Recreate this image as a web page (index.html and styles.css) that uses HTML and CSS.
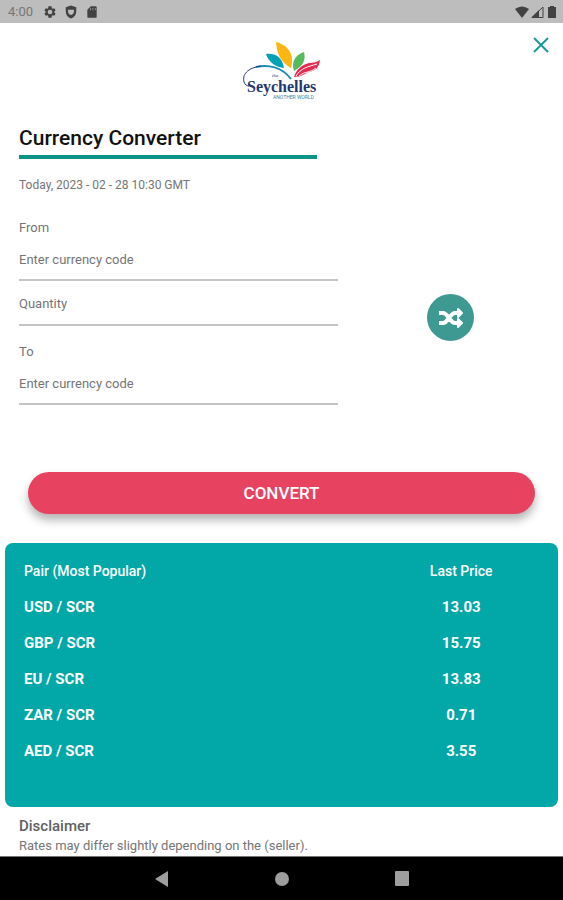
FILE: index.html
```html
<!DOCTYPE html>
<html lang="en">
<head>
<meta charset="utf-8">
<meta name="viewport" content="width=device-width, initial-scale=1">
<title>Currency Converter</title>
<link rel="stylesheet" href="styles.css">
</head>
<body>
<div class="app">
  <div class="status">
    <span class="status-time">4:00</span>
    <svg width="14" height="14" viewBox="0 0 24 24"><path fill="currentColor" fill-rule="evenodd" d="M19.4 13a7.500 7.500 0 0 0 0-2l2.200-1.700-2.200-3.800-2.600 1a7.500 7.500 0 0 0-1.700-1L14.700 2h-5.400l-.4 3.500a7.500 7.500 0 0 0-1.700 1l-2.600-1-2.200 3.800L4.600 11a7.500 7.500 0 0 0 0 2l-2.200 1.700 2.200 3.800 2.600-1a7.500 7.500 0 0 0 1.700 1l.4 3.500h5.400l.4-3.500a7.500 7.500 0 0 0 1.700-1l2.600 1 2.200-3.800zM12 16a4 4 0 1 1 0-8 4 4 0 0 1 0 8z"/></svg>
    <svg width="14" height="14" viewBox="0 0 24 24"><path fill="currentColor" fill-rule="evenodd" d="M12 1 3 4v7c0 6 4 10 9 12 5-2 9-6 9-12V4zM7 8h10v3c0 3-2 5-5 6-3-1-5-3-5-6z"/></svg>
    <svg width="14" height="14" viewBox="0 0 24 24"><path fill="currentColor" fill-rule="evenodd" d="M10 2 4 8v12a2 2 0 0 0 2 2h12a2 2 0 0 0 2-2V4a2 2 0 0 0-2-2zM9 5h1v4H9zm4 0h1v4h-1zm4 0h1v4h-1z"/></svg>
    <span class="status-end">
      <svg width="14" height="12" viewBox="0 0 14 12"><path fill="currentColor" d="M0 3Q7-2 14 3L7 12z"/></svg>
      <svg width="14" height="12" viewBox="0 0 14 12"><path fill="none" stroke="currentColor" d="M1 11.500h11V1z"/><path fill="currentColor" d="M0 12h8V4z"/></svg>
      <svg width="10" height="12" viewBox="0 0 10 12"><path fill="currentColor" d="M3 0h4v1h2v11H1V1h2z"/></svg>
    </span>
  </div>

  <header class="header">
    <svg class="logo" width="78" height="60" viewBox="0 0 78 60" role="img" aria-label="The Seychelles">
      <path fill="#00a2b8" d="M23 12c9-1 16 3 18 14-8-1-15-5-18-14z"/>
      <path fill="#fbb614" d="M33 0C44 3 52 11 48 26 38 20 34 13 33 0z"/>
      <path fill="#55bb5b" d="M61 10c2 8-1 14-10 19-3-9 1-16 10-19z"/>
      <path fill="#e52b50" d="M77 18c-1 8-5 11-11 12-5 2-8 5-15 5 2-7 7-12 15-14 5 0 8-1 11-3z"/>
      <path fill="none" stroke="#fff" d="M53 34c5-8 11-9 21-12M56 34c6-5 11-3 17-8"/>
      <path fill="none" stroke="#1b8cb5" stroke-width="2" d="M13 25c12-3 26 0 35 12"/>
      <path fill="none" stroke="#24386f" d="M18 24C4 26-1 33 1 40c1 3 3 4 5 4"/>
      <text class="logo-small" x="29" y="35">the</text>
      <text class="logo-name" x="4" y="50">Seychelles</text>
      <text class="logo-tag" x="30" y="57">ANOTHER WORLD</text>
    </svg>
    <button class="close" type="button" aria-label="Close">
      <svg width="16" height="16" viewBox="0 0 16 16"><path fill="none" stroke="currentColor" stroke-width="2" d="M1 1l14 14M15 1 1 15"/></svg>
    </button>
  </header>

  <main class="main">
    <h1 class="title">Currency Converter</h1>
    <p class="date">Today, 2023 - 02 - 28 10:30 GMT</p>

    <form class="form">
      <div class="entry">
        <div class="fields">
          <label class="label" for="from">From</label>
          <input class="field" id="from" type="text" placeholder="Enter currency code">
          <input class="field field-amount" type="text" placeholder="Quantity" aria-label="Quantity">
          <label class="label" for="to">To</label>
          <input class="field" id="to" type="text" placeholder="Enter currency code">
        </div>
        <div class="swap-area">
          <button class="swap" type="button" aria-label="Swap currencies">
            <svg width="26" height="22" viewBox="0 0 26 22"><g fill="none" stroke="currentColor" stroke-width="4"><path d="M1 6h4c5 0 7 10 12 10h3M1 16h4c5 0 7-10 12-10h3"/></g><path fill="currentColor" stroke="currentColor" stroke-width="2" stroke-linejoin="round" d="M20 2v8l4-4zM20 12v8l4-4z"/></svg>
          </button>
        </div>
      </div>
      <button class="convert" type="submit">CONVERT</button>
    </form>

    <section class="card">
      <table class="rates">
        <thead><tr><th>Pair (Most Popular)</th><th class="price">Last Price</th></tr></thead>
        <tbody>
          <tr><td>USD / SCR</td><td class="price">13.03</td></tr>
          <tr><td>GBP / SCR</td><td class="price">15.75</td></tr>
          <tr><td>EU / SCR</td><td class="price">13.83</td></tr>
          <tr><td>ZAR / SCR</td><td class="price">0.71</td></tr>
          <tr><td>AED / SCR</td><td class="price">3.55</td></tr>
        </tbody>
      </table>
    </section>

    <section class="disclaimer">
      <h2 class="disclaimer-title">Disclaimer</h2>
      <p class="disclaimer-text">Rates may differ slightly depending on the (seller).</p>
    </section>
  </main>

  <nav class="nav" aria-label="System">
    <button class="nav-button" type="button" aria-label="Back"><svg width="16" height="16" viewBox="0 0 16 16"><path fill="currentColor" d="M14 0v16L1 8z"/></svg></button>
    <button class="nav-button" type="button" aria-label="Home"><svg width="16" height="16" viewBox="0 0 16 16"><circle fill="currentColor" cx="8" cy="8" r="7"/></svg></button>
    <button class="nav-button" type="button" aria-label="Recent apps"><svg width="16" height="16" viewBox="0 0 16 16"><rect fill="currentColor" x="1" width="14" height="15" rx="1"/></svg></button>
  </nav>
</div>
</body>
</html>
```
FILE: styles.css
```css
* {
  box-sizing: border-box;
}

body {
  margin: 0;
  background: #fff;
  color: #757575;
  font-family: Roboto, "Liberation Sans", sans-serif;
  font-size: 13px;
  line-height: 20px;
}

h1, h2, p {
  margin: 0;
}

svg {
  display: block;
}

button {
  padding: 0;
  border: 0;
  background: none;
  color: inherit;
  font: inherit;
  cursor: pointer;
}

.app {
  display: flex;
  flex-direction: column;
  min-height: 100vh;
}

.status {
  display: flex;
  align-items: center;
  gap: 7px;
  height: 23px;
  padding: 0 6px 0 8px;
  background: #bdbdbd;
  color: #424242;
}

.status-time {
  margin-right: 3px;
  color: #757575;
}

.status-end {
  display: flex;
  gap: 2px;
  margin-left: auto;
}

.header {
  display: grid;
  grid-template-columns: 1fr auto 1fr;
  align-items: start;
  padding: 14px 14px 0;
}

.logo {
  grid-column: 2;
  margin-top: 5px;
}

.logo-name {
  fill: #24386f;
  font: bold 16px "Liberation Serif", serif;
}

.logo-small {
  fill: #24386f;
  font: italic 5px "Liberation Serif", serif;
}

.logo-tag {
  fill: #1b8cb5;
  font: 5px Roboto, sans-serif;
}

.close {
  justify-self: end;
  color: #1a9c96;
}

.main {
  flex: 1;
}

.title {
  width: 53%;
  margin: 23px 0 0 19px;
  padding-bottom: 4px;
  border-bottom: 4px solid #0d9488;
  color: #111;
  font-size: 21px;
  font-weight: 500;
  line-height: 26px;
}

.date {
  margin: 16px 19px 0;
  font-size: 12px;
}

.entry {
  display: flex;
  margin-top: 23px;
  padding-left: 19px;
}

.fields {
  display: flex;
  flex-direction: column;
  width: 319px;
  max-width: 60%;
}

.label {
  line-height: 20px;
}

.field {
  width: 100%;
  height: 43px;
  padding: 2px 0 0;
  border: 0;
  border-bottom: 2px solid #c4c4c4;
  background: none;
  color: #424242;
  font: inherit;
}

.field::placeholder {
  color: #757575;
  opacity: 1;
}

.field-amount {
  height: 45px;
  margin-bottom: 16px;
}

.swap-area {
  display: flex;
  flex: 1;
  align-items: center;
  justify-content: center;
  padding-top: 12px;
}

.swap {
  display: grid;
  place-items: center;
  width: 47px;
  height: 47px;
  border-radius: 50%;
  background: #3f9993;
  color: #fff;
}

.convert {
  display: block;
  width: calc(100% - 56px);
  height: 42px;
  margin: 67px 28px 0;
  border-radius: 21px;
  background: #e84261;
  box-shadow: 0 6px 10px rgba(0, 0, 0, 0.3);
  color: #fff;
  font-size: 17px;
  font-weight: 500;
}

.card {
  margin: 29px 5px 0;
  padding: 10px 0 38px;
  border-radius: 8px;
  background: #02a8a7;
  color: #fff;
}

.rates {
  width: 100%;
  border-collapse: collapse;
  table-layout: fixed;
  font-size: 15px;
  font-weight: 700;
  text-align: left;
}

.rates th {
  font-size: 14px;
  font-weight: 500;
}

.rates th,
.rates td {
  height: 36px;
  padding: 0 0 0 19px;
}

.rates .price {
  width: 35%;
  padding: 0;
  text-align: center;
}

.disclaimer {
  padding: 9px 19px 0;
}

.disclaimer-title {
  color: #616161;
  font-size: 15px;
  font-weight: 500;
  line-height: 20px;
}

.disclaimer-text {
  line-height: 20px;
}

.nav {
  display: flex;
  align-items: center;
  justify-content: center;
  gap: 104px;
  height: 45px;
  border-top: 1px solid #757575;
  background: #000;
  color: #9e9e9e;
}
```
